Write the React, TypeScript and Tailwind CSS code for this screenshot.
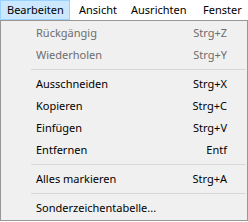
import React from "react";

type Item =
  | { kind: "item"; label: string; shortcut?: string; disabled?: boolean }
  | { kind: "sep" };

const items: Item[] = [
  { kind: "item", label: "Rückgängig", shortcut: "Strg+Z", disabled: true },
  { kind: "item", label: "Wiederholen", shortcut: "Strg+Y", disabled: true },
  { kind: "sep" },
  { kind: "item", label: "Ausschneiden", shortcut: "Strg+X" },
  { kind: "item", label: "Kopieren", shortcut: "Strg+C" },
  { kind: "item", label: "Einfügen", shortcut: "Strg+V" },
  { kind: "item", label: "Entfernen", shortcut: "Entf" },
  { kind: "sep" },
  { kind: "item", label: "Alles markieren", shortcut: "Strg+A" },
  { kind: "sep" },
  { kind: "item", label: "Sonderzeichentabelle..." },
];

export default function App() {
  return (
    <div
      className="w-[248px] h-[222px] bg-white text-[11px] text-black overflow-hidden"
      style={{ fontFamily: '"Noto Sans", "Open Sans", sans-serif' }}
    >
      <div className="flex h-[20px] items-stretch">
        <div className="w-[70px] pl-[7px] flex items-center bg-[#cce8ff] border border-[#99d1ff] -ml-0">
          <span className="-ml-px">Bearbeiten</span>
        </div>
        <div className="w-[52px] ml-[2px] pl-[7px] flex items-center">Ansicht</div>
        <div className="w-[72px] pl-[7px] flex items-center">Ausrichten</div>
        <div className="pl-[7px] flex items-center">Fenster</div>
      </div>
      <div className="w-[248px] h-[201px] bg-[#f0f0f0] border border-[#979797] py-px">
        {items.map((it, i) =>
          it.kind === "sep" ? (
            <div key={i} className="h-[7px] pt-[3px] pl-[30px] pr-[1px]">
              <div className="h-px bg-[#d7d7d7]" />
            </div>
          ) : (
            <div
              key={i}
              className={
                "h-[22px] flex items-center justify-between pl-[35px] pr-[20px] " +
                (it.disabled ? "text-[#6d6d6d]" : "text-black")
              }
            >
              <span>{it.label}</span>
              {it.shortcut && <span>{it.shortcut}</span>}
            </div>
          )
        )}
      </div>
    </div>
  );
}
